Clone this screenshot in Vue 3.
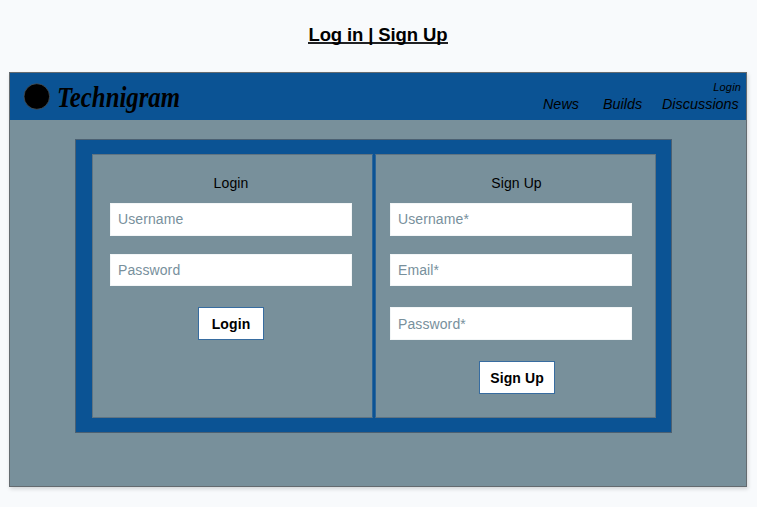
<script setup>
const links = [
  { label: 'News', cls: 'news' },
  { label: 'Builds', cls: 'builds' },
  { label: 'Discussions', cls: 'discussions' },
]
const forms = [
  { title: 'Login', fields: ['Username', 'Password'], action: 'Login', cls: 'login' },
  { title: 'Sign Up', fields: ['Username*', 'Email*', 'Password*'], action: 'Sign Up', cls: 'signup' },
]
</script>

<template>
  <main class="page">
    <h1 class="title">
      <svg width="142" height="28"><path d="M0 22H140" stroke="#202124" stroke-width="2" /><text x="0.5" y="20" textLength="139">Log in | Sign Up</text></svg>
    </h1>
    <section class="frame">
      <header class="bar">
        <svg class="brand" width="190" height="47" viewBox="0 0 190 47">
          <circle cx="26.8" cy="23.5" r="12.8" fill="#000" stroke="#4a5257" stroke-width="0.8" />
          <text class="logo" x="47" y="33.5" textLength="123" lengthAdjust="spacingAndGlyphs">Technigram</text>
        </svg>
        <div class="menu">
          <a class="account">Login</a>
          <nav class="links">
            <a v-for="l in links" :key="l.label" :class="l.cls">{{ l.label }}</a>
          </nav>
        </div>
      </header>
      <div class="panel">
        <form v-for="f in forms" :key="f.cls" class="card" :class="f.cls" @submit.prevent>
          <h2>{{ f.title }}</h2>
          <input v-for="p in f.fields" :key="p" :placeholder="p" />
          <button>{{ f.action }}</button>
        </form>
      </div>
    </section>
  </main>
</template>

<style>
body { background: #f8fafc; }
</style>

<style scoped>
* { box-sizing: border-box; }
.page {
  height: 507px;
  overflow: hidden;
  padding-left: 9px;
  background: #f8fafc;
  font-family: "Liberation Sans", Arial, sans-serif;
  color: #000;
}
.title { margin: 0; height: 72px; padding: 21px 0 0 299px; font-size: 18.5px; }
.title svg { display: block; }
.frame {
  width: 738px;
  height: 415px;
  border: 1px solid #646b70;
  background: #78909b;
  box-shadow: 1px 2px 4px rgba(0, 0, 0, .15);
}
.bar {
  height: 47px;
  display: flex;
  justify-content: space-between;
  background: #0b5394;
}
.brand { display: block; overflow: visible; }
.logo {
  font: italic bold 29px "Liberation Serif", "Times New Roman", serif;
}
.menu { width: 203px; padding-top: 8px; font-style: italic; }
.account { display: block; padding-right: 5px; text-align: right; font-size: 11px; line-height: 13px; letter-spacing: .15px; }
.links { display: flex; font-size: 14.3px; line-height: 18px; padding-top: 1px; letter-spacing: .05px; }
.news { width: 60px; }
.builds { width: 59px; }
.panel {
  display: flex;
  gap: 2px;
  width: 597px;
  height: 294px;
  margin: 19px 0 0 65px;
  padding: 14px 15px 14px 16px;
  border: 1px solid #4b6072;
  background: #0b5394;
}
.card {
  display: flex;
  flex-direction: column;
  width: 281px;
  height: 264px;
  border: 1px solid #607482;
  background: #78909b;
}
.login { border-right-color: #2c659a; }
.signup { border-left-color: #2c659a; }
h2 { margin: 19px 0 11px; height: 18px; font-size: 14px; line-height: 18px; font-weight: 400; text-align: center; letter-spacing: .1px; }
.login h2 { padding-right: 3px; }
.signup h2 { padding-left: 2px; }
input {
  width: 242px;
  height: 33px;
  margin: 0 0 18px 17px;
  padding: 0 7px;
  border: 1px solid #f3f6f7;
  border-radius: 0;
  background: #fff;
  font: 14px "Liberation Sans", Arial, sans-serif;
  letter-spacing: .1px;
}
input:nth-of-type(1) { padding-bottom: 1px; }
input:nth-of-type(2) { height: 32px; margin-bottom: 21px; }
input:nth-of-type(3) { margin-bottom: 21px; }
.signup input { margin-left: 14px; }
input::placeholder { color: #78909c; opacity: 1; }
button {
  width: 66px;
  height: 33px;
  margin-left: 105px;
  padding: 0;
  border: 1px solid #376ca0;
  background: #fff;
  color: #000;
  font: bold 14px "Liberation Sans", Arial, sans-serif;
  letter-spacing: .1px;
}
.signup button { width: 76px; margin-left: 103px; }
</style>
